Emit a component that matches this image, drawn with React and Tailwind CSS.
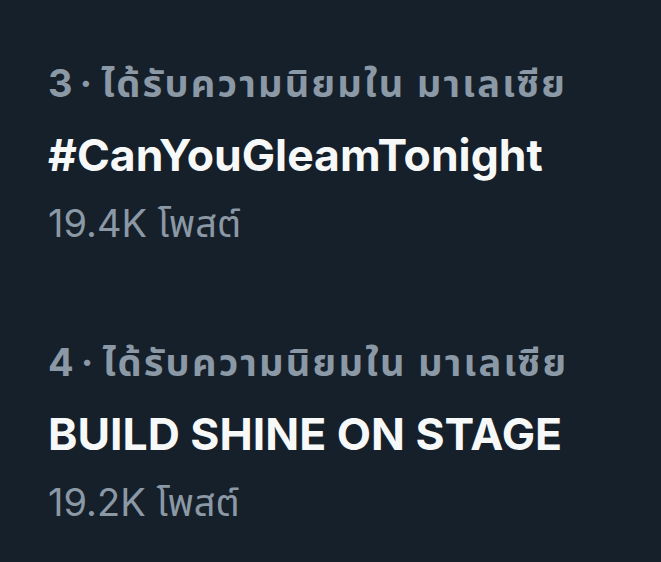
export default function App() {
  const trends = [
    { rank: 3, name: "#CanYouGleamTonight", posts: "19.4K" },
    { rank: 4, name: "BUILD SHINE ON STAGE", posts: "19.2K" },
  ];
  return (
    <div
      className="w-[661px] h-[562px] bg-[#16202a] overflow-hidden pl-[48px] pt-[60px] flex flex-col gap-[92px]"
      style={{ fontFamily: 'Inter, "Noto Sans", "Noto Sans Thai", sans-serif' }}
    >
      {trends.map((t) => (
        <div key={t.rank} className="flex flex-col">
          <div className="text-[38px] leading-[47px] font-bold text-[#8b98a5] whitespace-nowrap">
            {t.rank}
            <span className="ml-[7px] mr-[9px]">·</span>
            <span className="tracking-[2.2px]">ได้รับความนิยมใน มาเลเซีย</span>
          </div>
          <div className="mt-[19px] text-[44.5px] leading-[59px] font-bold text-[#f7f9f9] whitespace-nowrap">
            {t.name}
          </div>
          <div className="mt-[15px] text-[38px] leading-[47px] text-[#8b98a5] whitespace-nowrap">
            {t.posts} โพสต์
          </div>
        </div>
      ))}
    </div>
  );
}
